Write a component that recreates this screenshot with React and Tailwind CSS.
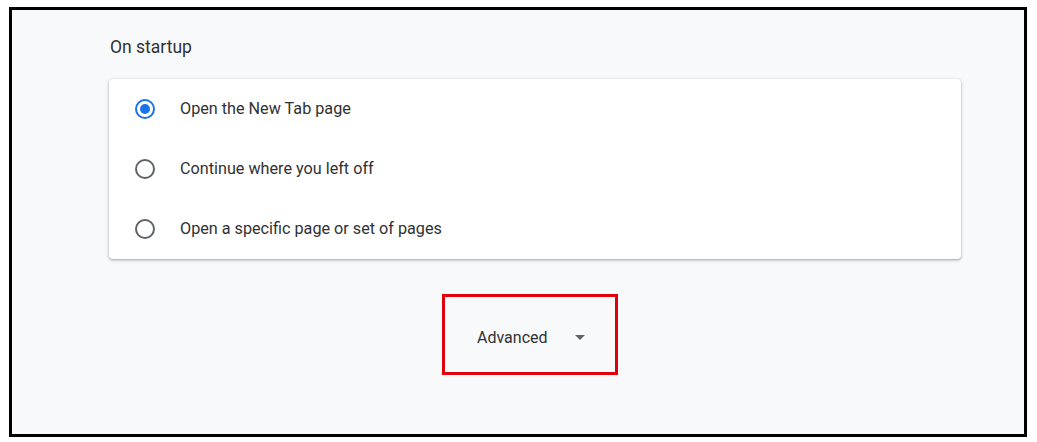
import React from "react";

function Radio({ checked }) {
  return checked ? (
    <div className="w-5 h-5 rounded-full border-2 border-[#1a73e8] flex items-center justify-center">
      <div className="w-[10px] h-[10px] rounded-full bg-[#1a73e8]" />
    </div>
  ) : (
    <div className="w-5 h-5 rounded-full border-2 border-[#5f6368]" />
  );
}

const rows = [
  { label: "Open the New Tab page", checked: true },
  { label: "Continue where you left off", checked: false },
  { label: "Open a specific page or set of pages", checked: false },
];

export default function App() {
  return (
    <div
      className="w-[1037px] h-[442px] bg-white pt-[7px] pl-[9px]"
      style={{ fontFamily: "Roboto, 'Liberation Sans', sans-serif" }}
    >
      <div className="w-[1018px] h-[430px] border-[3px] border-black bg-[#f8f9fa] pl-[98px] pt-[25px]">
        <div className="text-[17.5px] leading-6 text-[#303134]">On startup</div>
        <div className="mt-[20px] -ml-px w-[852px] bg-white rounded-[4px] shadow-[0_1px_2px_0_rgba(60,64,67,0.3),0_1px_3px_1px_rgba(60,64,67,0.15)]">
          {rows.map((r, i) => (
            <div key={i} className="h-[60px] flex items-center pl-[26px]">
              <Radio checked={r.checked} />
              <span className="ml-[25px] text-[16.2px] text-[#303134]">{r.label}</span>
            </div>
          ))}
        </div>
        <div className="mt-[35px] ml-[332px] w-[176px] h-[81px] border-[3px] border-[#e0000b] flex items-center pl-[32px] pt-[6px]">
          <span className="text-[16px] text-[#303134]">Advanced</span>
          <svg className="ml-[27px]" width="10" height="5" viewBox="0 0 10 5">
            <path d="M0 0 L10 0 L5 5 Z" fill="#5f6368" />
          </svg>
        </div>
      </div>
    </div>
  );
}
